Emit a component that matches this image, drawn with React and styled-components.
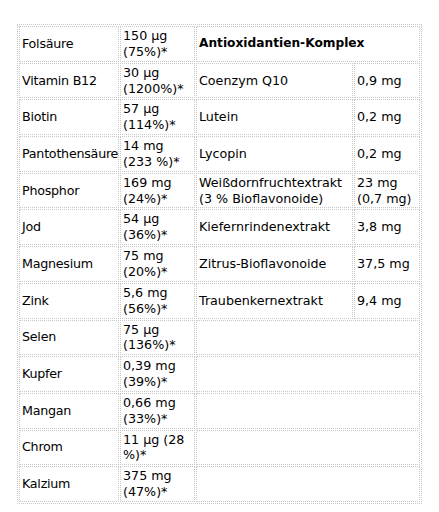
import React from 'react'
import styled, {createGlobalStyle} from 'styled-components'

const GlobalStyle = createGlobalStyle`
  body {
    margin: 0;
    background: #fff;
    font-family: "DejaVu Sans", Verdana, sans-serif;
    color: #000;
  }
`

const Page = styled.div`
  padding: 24px 0 0 17px;
`

const Table = styled.table`
  width: 405px;
  border: 1px dotted #c8c8c8;
  border-collapse: separate;
  border-spacing: 1px;
  table-layout: fixed;
  font-size: 12.7px;
  line-height: 15.85px;
`

const Cell = styled.td`
  border: 1px dotted #c8c8c8;
  padding: 1px 2px;
  vertical-align: middle;
  font-weight: ${props => (props.$bold ? 'bold' : 'normal')};
  font-size: ${props => (props.$bold ? '12.2px' : 'inherit')};
`

const NameCell = styled(Cell)`
  padding-right: 0;
  white-space: nowrap;
  letter-spacing: -0.25px;
`

const minerals = [
  ['Folsäure', '150 µg (75%)*'],
  ['Vitamin B12', '30 µg (1200%)*'],
  ['Biotin', '57 µg (114%)*'],
  ['Pantothensäure', '14 mg (233 %)*'],
  ['Phosphor', '169 mg (24%)*'],
  ['Jod', '54 µg (36%)*'],
  ['Magnesium', '75 mg (20%)*'],
  ['Zink', '5,6 mg (56%)*'],
  ['Selen', '75 µg (136%)*'],
  ['Kupfer', '0,39 mg (39%)*'],
  ['Mangan', '0,66 mg (33%)*'],
  ['Chrom', '11 µg (28 %)*'],
  ['Kalzium', '375 mg (47%)*'],
]

const antioxidants = [
  ['Coenzym Q10', '0,9 mg'],
  ['Lutein', '0,2 mg'],
  ['Lycopin', '0,2 mg'],
  ['Weißdornfruchtextrakt (3 % Bioflavonoide)', '23 mg (0,7 mg)'],
  ['Kiefernrindenextrakt', '3,8 mg'],
  ['Zitrus-Bioflavonoide', '37,5 mg'],
  ['Traubenkernextrakt', '9,4 mg'],
]

const App = () => {
  return (
    <Page>
      <GlobalStyle />
      <Table>
        <colgroup>
          <col style={{width: 100}} />
          <col style={{width: 75}} />
          <col style={{width: 157}} />
          <col style={{width: 66}} />
        </colgroup>
        <tbody>
          {minerals.map(([name, amount], i) => {
            let right
            if (i === 0) {
              right = <Cell colSpan={2} $bold>Antioxidantien-Komplex</Cell>
            } else if (antioxidants[i - 1]) {
              const [aName, aAmount] = antioxidants[i - 1]
              right = (
                <>
                  <Cell>{aName}</Cell>
                  <Cell>{aAmount}</Cell>
                </>
              )
            } else {
              right = <Cell colSpan={2}>&nbsp;</Cell>
            }
            return (
              <tr key={name}>
                <NameCell>{name}</NameCell>
                <Cell>{amount}</Cell>
                {right}
              </tr>
            )
          })}
        </tbody>
      </Table>
    </Page>
  )
}

export default App
